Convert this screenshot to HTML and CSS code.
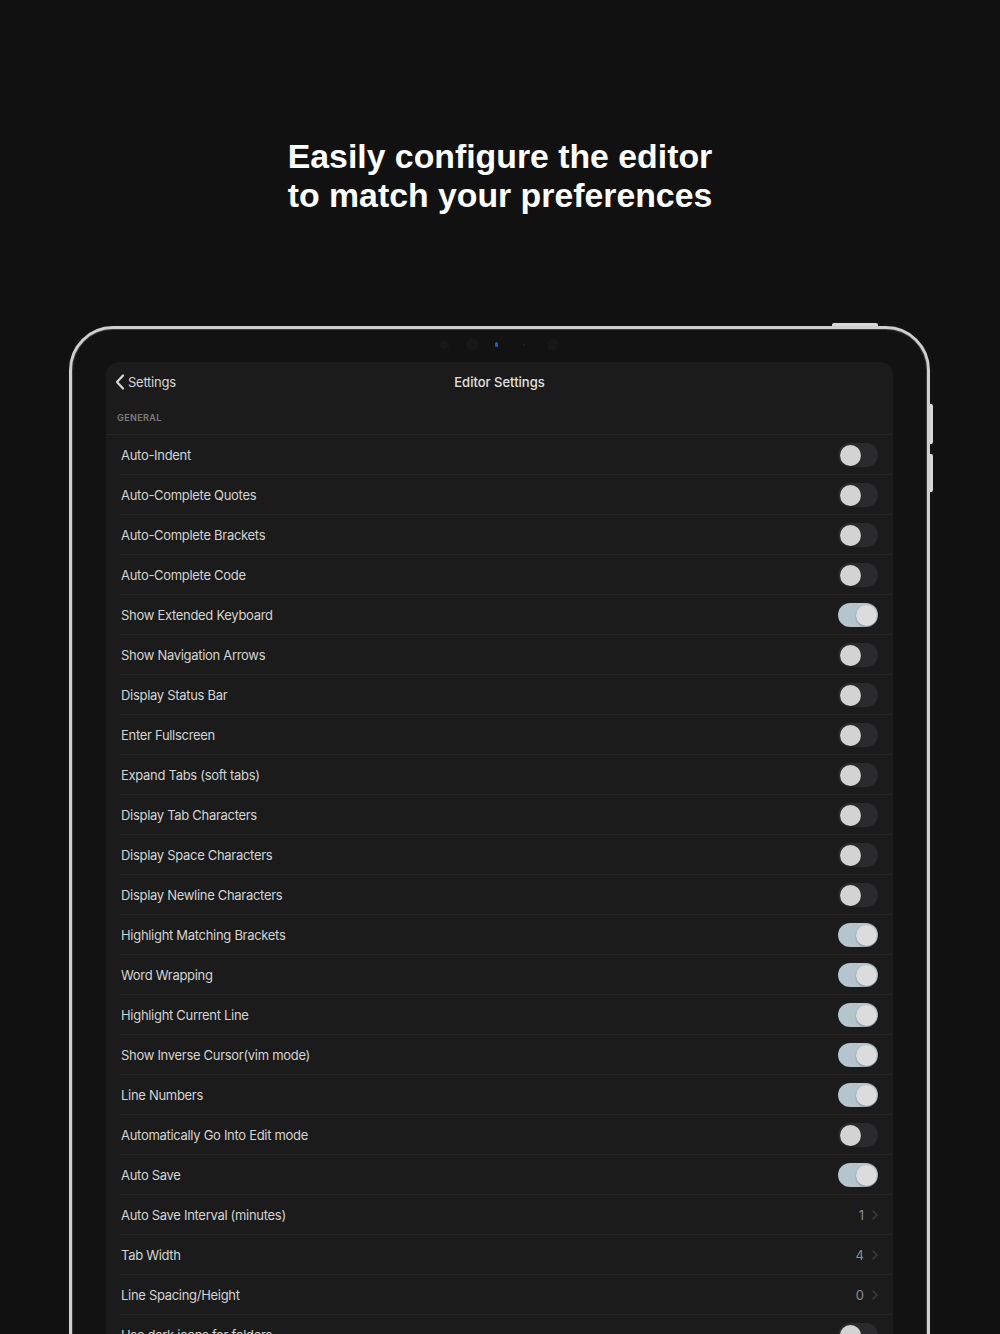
FILE: index.html
```html
<!DOCTYPE html>
<html lang="en">
<head>
<meta charset="utf-8">
<title>Editor Settings</title>
<link rel="stylesheet" href="styles.css">
</head>
<body>
<main class="page">
  <h1 class="headline">Easily configure the editor<br>to match your preferences</h1>

  <div class="device">
    <span class="btn-top"></span>
    <span class="btn-side btn-side-1"></span>
    <span class="btn-side btn-side-2"></span>

    <div class="sensors">
      <span class="dot d1"></span>
      <span class="dot d2"></span>
      <span class="dot d3"></span>
      <span class="dot d4"></span>
      <span class="dot d5"></span>
    </div>

    <section class="screen">
      <header class="navbar">
        <a class="back">
          <svg class="back-icon" viewBox="0 0 10 16" width="10" height="16"><path d="M8 1.5 L2 8 L8 14.5" fill="none" stroke="currentColor" stroke-width="2.2" stroke-linecap="round" stroke-linejoin="round"/></svg>
          <span>Settings</span>
        </a>
        <div class="nav-title">Editor Settings</div>
        <div class="nav-spacer"></div>
      </header>

      <div class="section-head">GENERAL</div>

      <ul class="list">
        <li class="row"><span class="label">Auto-Indent</span><span class="toggle"></span></li>
        <li class="row"><span class="label">Auto-Complete Quotes</span><span class="toggle"></span></li>
        <li class="row"><span class="label">Auto-Complete Brackets</span><span class="toggle"></span></li>
        <li class="row"><span class="label">Auto-Complete Code</span><span class="toggle"></span></li>
        <li class="row"><span class="label">Show Extended Keyboard</span><span class="toggle on"></span></li>
        <li class="row"><span class="label">Show Navigation Arrows</span><span class="toggle"></span></li>
        <li class="row"><span class="label">Display Status Bar</span><span class="toggle"></span></li>
        <li class="row"><span class="label">Enter Fullscreen</span><span class="toggle"></span></li>
        <li class="row"><span class="label">Expand Tabs (soft tabs)</span><span class="toggle"></span></li>
        <li class="row"><span class="label">Display Tab Characters</span><span class="toggle"></span></li>
        <li class="row"><span class="label">Display Space Characters</span><span class="toggle"></span></li>
        <li class="row"><span class="label">Display Newline Characters</span><span class="toggle"></span></li>
        <li class="row"><span class="label">Highlight Matching Brackets</span><span class="toggle on"></span></li>
        <li class="row"><span class="label">Word Wrapping</span><span class="toggle on"></span></li>
        <li class="row"><span class="label">Highlight Current Line</span><span class="toggle on"></span></li>
        <li class="row"><span class="label">Show Inverse Cursor(vim mode)</span><span class="toggle on"></span></li>
        <li class="row"><span class="label">Line Numbers</span><span class="toggle on"></span></li>
        <li class="row"><span class="label">Automatically Go Into Edit mode</span><span class="toggle"></span></li>
        <li class="row"><span class="label">Auto Save</span><span class="toggle on"></span></li>
        <li class="row"><span class="label">Auto Save Interval (minutes)</span><span class="value">1<svg class="chev" viewBox="0 0 6 10" width="6" height="10"><path d="M1 1 L5 5 L1 9" fill="none" stroke="currentColor" stroke-width="1.4" stroke-linecap="round" stroke-linejoin="round"/></svg></span></li>
        <li class="row"><span class="label">Tab Width</span><span class="value">4<svg class="chev" viewBox="0 0 6 10" width="6" height="10"><path d="M1 1 L5 5 L1 9" fill="none" stroke="currentColor" stroke-width="1.4" stroke-linecap="round" stroke-linejoin="round"/></svg></span></li>
        <li class="row"><span class="label">Line Spacing/Height</span><span class="value">0<svg class="chev" viewBox="0 0 6 10" width="6" height="10"><path d="M1 1 L5 5 L1 9" fill="none" stroke="currentColor" stroke-width="1.4" stroke-linecap="round" stroke-linejoin="round"/></svg></span></li>
        <li class="row"><span class="label">Use dark icons for folders</span><span class="toggle"></span></li>
      </ul>
    </section>
  </div>
</main>
</body>
</html>
```

FILE: styles.css
```css
html, body {
  margin: 0;
  padding: 0;
  height: 1334px;
  overflow: hidden;
  background: #111111;
}

body {
  font-family: "Inter", "Liberation Sans", sans-serif;
  color: #d8d8d8;
}

.page {
  display: flex;
  flex-direction: column;
  align-items: center;
}

.headline {
  margin: 137px 0 0;
  font-family: "Liberation Sans", "Inter", sans-serif;
  font-weight: 700;
  font-size: 33.8px;
  line-height: 39px;
  color: #ffffff;
  text-align: center;
  letter-spacing: 0;
}

.device {
  position: relative;
  margin-top: 111px;
  margin-left: 69px;
  align-self: flex-start;
  width: 861px;
  height: 1100px;
  border: 3px solid #cfcfcf;
  border-radius: 44px;
  background: #121212;
  box-shadow: inset 0 0 0 1px #3a3a3a, 0 0 18px rgba(255, 255, 255, 0.025);
  padding: 0 34px;
  box-sizing: border-box;
  display: flex;
  flex-direction: column;
}

.btn-top {
  position: absolute;
  top: -6px;
  left: 760px;
  width: 46px;
  height: 3px;
  background: #d8d8d8;
  border-radius: 2px 2px 0 0;
}

.btn-side {
  position: absolute;
  right: -6px;
  width: 3px;
  background: #d8d8d8;
  border-radius: 0 2px 2px 0;
}

.btn-side-1 { top: 75px; height: 40px; }
.btn-side-2 { top: 125px; height: 38px; }

.sensors {
  height: 27px;
  display: flex;
  align-items: center;
  justify-content: center;
  padding-top: 2px;
}

.dot {
  display: block;
  border-radius: 50%;
  background: #181818;
}

.d1 { width: 9px; height: 9px; margin-right: 17px; }
.d2 { width: 13px; height: 13px; margin-right: 16px; background: #171717; }
.d3 { width: 3px; height: 5px; border-radius: 1.5px; background: #2a5fa8; margin-right: 25px; }
.d4 { width: 2px; height: 2px; background: #222; margin-right: 22px; }
.d5 { width: 12px; height: 12px; background: #171717; }

.screen {
  margin-top: 4px;
  background: #1b1b1b;
  border-radius: 12px 12px 0 0;
  flex: 1;
}

.navbar {
  height: 40px;
  display: flex;
  align-items: center;
  padding: 0 9px;
}

.back {
  flex: 1;
  display: flex;
  align-items: center;
  gap: 3px;
  font-size: 13px;
  letter-spacing: -0.25px;
  color: #d6d6d6;
}

.back-icon {
  color: #d8d8d8;
}

.nav-title {
  font-size: 13px;
  font-weight: 500;
  color: #e2e2e2;
}

.nav-spacer {
  flex: 1;
}

.section-head {
  height: 33px;
  box-sizing: border-box;
  padding: 10px 0 0 11px;
  font-size: 9px;
  font-weight: 600;
  letter-spacing: 0.4px;
  color: #7c7c7c;
  border-bottom: 1px solid #252525;
}

.list {
  list-style: none;
  margin: 0;
  padding: 0 0 0 14px;
}

.row {
  height: 40px;
  box-sizing: border-box;
  display: flex;
  align-items: center;
  justify-content: space-between;
  padding: 0 15px 0 1px;
  border-bottom: 1px solid #252525;
}

.label {
  font-size: 13px;
  color: #d4d4d4;
  letter-spacing: -0.3px;
}

.toggle {
  position: relative;
  width: 40px;
  height: 24px;
  border-radius: 12px;
  background: #2b2b2d;
  margin-top: 1px;
}

.toggle::after {
  content: "";
  position: absolute;
  top: 1.5px;
  left: 1.5px;
  width: 21px;
  height: 21px;
  border-radius: 50%;
  background: #d3d3d3;
  box-shadow: 0 1px 2px rgba(0, 0, 0, 0.3);
}

.toggle.on {
  background: #b6c5cd;
}

.toggle.on::after {
  left: 17.5px;
  background: #dcdcdc;
}

.value {
  display: flex;
  align-items: center;
  gap: 8px;
  font-size: 13px;
  color: #8e8e8e;
}

.chev {
  color: #3e3e3e;
}
```
